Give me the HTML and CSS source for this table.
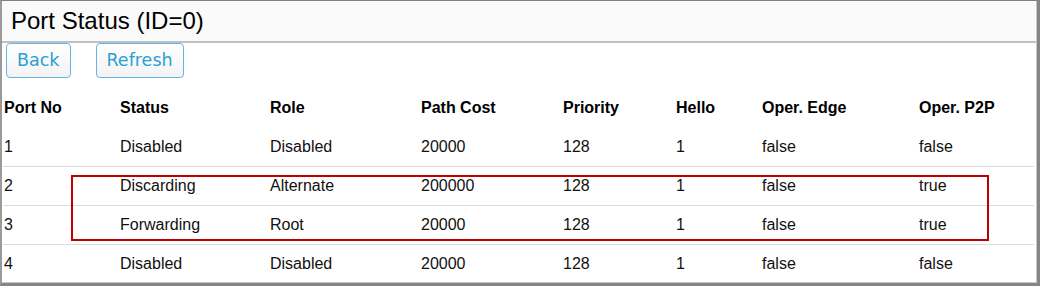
FILE: index.html
```html
<!DOCTYPE html>
<html>
<head>
<meta charset="utf-8">
<link rel="stylesheet" href="styles.css">
</head>
<body>
<div class="frame">
  <div class="page">
    <div class="titlebar">Port Status (ID=0)</div>
    <div class="toolbar">
      <button class="btn">Back</button>
      <button class="btn">Refresh</button>
    </div>
    <table class="ports">
      <colgroup>
        <col class="c1"><col class="c2"><col class="c3"><col class="c4"><col class="c5"><col class="c6"><col class="c7"><col class="c8">
      </colgroup>
      <thead>
        <tr><th>Port No</th><th>Status</th><th>Role</th><th>Path Cost</th><th>Priority</th><th>Hello</th><th>Oper. Edge</th><th>Oper. P2P</th></tr>
      </thead>
      <tbody>
        <tr><td>1</td><td>Disabled</td><td>Disabled</td><td>20000</td><td>128</td><td>1</td><td>false</td><td>false</td></tr>
        <tr><td>2</td><td>Discarding</td><td>Alternate</td><td>200000</td><td>128</td><td>1</td><td>false</td><td>true</td></tr>
        <tr><td>3</td><td>Forwarding</td><td>Root</td><td>20000</td><td>128</td><td>1</td><td>false</td><td>true</td></tr>
        <tr><td>4</td><td>Disabled</td><td>Disabled</td><td>20000</td><td>128</td><td>1</td><td>false</td><td>false</td></tr>
      </tbody>
    </table>
  </div>
  <div class="highlight"></div>
</div>
</body>
</html>
```
FILE: styles.css
```css
html, body {
  margin: 0;
  padding: 0;
  background: #ffffff;
}

.frame {
  position: relative;
  width: 1040px;
  height: 286px;
  box-sizing: border-box;
  border-top: 1px solid #808080;
  border-left: 2px solid #9a9a9a;
  border-right: 3px solid #858585;
  border-bottom: 3px solid #858585;
  background: #ffffff;
  overflow: hidden;
  font-family: "Liberation Sans", Arial, sans-serif;
  color: #111;
}

.page {
  height: 100%;
  box-sizing: border-box;
  border-right: 1px solid #c8c8c8;
  border-bottom: 1px solid #c8c8c8;
}

.titlebar {
  height: 40px;
  line-height: 40px;
  background: #fafafa;
  border-bottom: 2px solid #c0c0c0;
  padding-left: 9px;
  font-size: 24px;
  color: #000;
}

.toolbar {
  display: flex;
  gap: 25px;
  padding-left: 4px;
}

.btn {
  height: 35px;
  padding: 0 10px;
  border: 1px solid #62b6e4;
  border-radius: 4px;
  background: linear-gradient(#ffffff, #f3f3f3);
  color: #2a9fd6;
  font-family: "DejaVu Sans", Verdana, sans-serif;
  font-size: 17.5px;
  line-height: 33px;
  margin: 0;
}

.ports {
  margin: 11px 0 0 1px;
  width: 1031px;
  table-layout: fixed;
  border-collapse: collapse;
  font-size: 16px;
}

.c1 { width: 116px; }
.c2 { width: 150px; }
.c3 { width: 151px; }
.c4 { width: 142px; }
.c5 { width: 113px; }
.c6 { width: 86px; }
.c7 { width: 157px; }
.c8 { width: 116px; }

.ports th {
  height: 38px;
  padding: 0 0 0 1px;
  text-align: left;
  font-weight: bold;
  color: #000;
}

.ports td {
  height: 38px;
  padding: 0 0 0 1px;
  text-align: left;
  border-top: 1px solid #dcdcdc;
  color: #111;
}

.ports tbody tr:first-child td {
  border-top-color: #ffffff;
}

.highlight {
  position: absolute;
  left: 69px;
  top: 174px;
  width: 918px;
  height: 66px;
  box-sizing: border-box;
  border: 2px solid #c00000;
}
```
